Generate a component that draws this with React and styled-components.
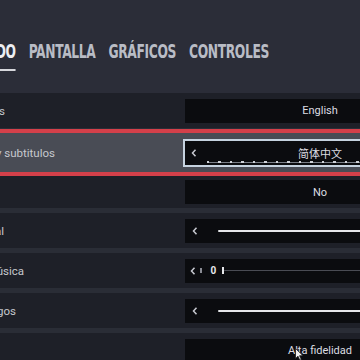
import React from "react";
import styled, { createGlobalStyle } from "styled-components";

const Global = createGlobalStyle`
  html, body {
    margin: 0;
    padding: 0;
    width: 360px;
    height: 360px;
    overflow: hidden;
    background: #1e2028;
  }
`;

const Screen = styled.div`
  width: 360px;
  height: 360px;
  overflow: hidden;
  position: relative;
  font-family: Roboto, "Noto Sans", "Liberation Sans", sans-serif;
`;

const Header = styled.div`
  height: 93px;
  background: #2b2d38;
  display: flex;
  align-items: flex-start;
  padding-top: 40px;
  box-sizing: border-box;
`;

const Tabs = styled.div`
  display: flex;
  gap: 18px;
  margin-left: -37px;
  transform: scaleX(0.72);
  transform-origin: left center;
`;

const Tab = styled.div`
  font-family: "Liberation Sans Narrow", "DejaVu Sans Condensed", "Liberation Sans", sans-serif;
  font-weight: 700;
  font-size: 19px;
  letter-spacing: -0.5px;
  line-height: 22px;
  color: ${(p) => (p.$active ? "#eceef2" : "#b9bcc5")};
  padding-bottom: 7px;
  border-bottom: 2px solid ${(p) => (p.$active ? "#d6d7dc" : "transparent")};
  white-space: nowrap;
`;

const List = styled.div`
  display: flex;
  flex-direction: column;
  background: #2a2d36;
`;

const Row = styled.div`
  height: ${(p) => p.$h || 35}px;
  margin-top: ${(p) => p.$mt ?? 5}px;
  background: #1e2028;
  display: flex;
  align-items: center;
  flex-shrink: 0;
`;

const SelectedRow = styled(Row)`
  background: #494c55;
  box-shadow: 0 -4px 0 #d4404a, 0 4px 0 #d4404a;
`;

const LabelCell = styled.div`
  width: 183px;
  flex-shrink: 0;
  display: flex;
`;

const LabelClip = styled.div`
  width: ${(p) => Math.max(p.$end, 0)}px;
  margin-left: ${(p) => Math.min(p.$end, 0)}px;
  display: flex;
  justify-content: flex-end;
`;

const LabelText = styled.span`
  flex-shrink: 0;
  white-space: nowrap;
  font-size: 11.5px;
  color: #c6c8ce;
`;

const Control = styled.div`
  margin-left: 2px;
  width: 270px;
  height: 24px;
  flex-shrink: 0;
  background: #0b0c0f;
  display: flex;
  align-items: center;
  position: relative;
  box-sizing: border-box;
`;

const SelectedControl = styled(Control)`
  margin-left: 0;
  width: 274px;
  height: 28px;
  border: 2px solid #c6d3e0;
  &::after {
    content: "";
    position: absolute;
    left: 22px;
    right: 0;
    bottom: 2px;
    height: 2px;
    background:
      repeating-linear-gradient(90deg, #d0d3da 0 2.5px, transparent 2.5px 11.5px),
      linear-gradient(#7a7e87, #7a7e87) 0 1px / 100% 1px no-repeat;
  }
`;

const Chevron = styled.svg`
  width: 6px;
  height: 8px;
  margin-left: ${(p) => p.$ml ?? 7}px;
  flex-shrink: 0;
`;

const ValueText = styled.span`
  position: absolute;
  left: 0;
  right: 0;
  text-align: center;
  font-size: 11px;
  color: #dcdde2;
  font-family: Roboto, "Noto Sans", "Noto Sans CJK SC", sans-serif;
  pointer-events: none;
`;

const Track = styled.div`
  flex: 1;
  height: ${(p) => (p.$thin ? 1 : 2)}px;
  margin-left: ${(p) => p.$ml ?? 20}px;
  background: ${(p) => (p.$thin ? "#4a4c54" : "#e6e7ea")};
  border-radius: 1px;
`;

const Tick = styled.div`
  width: 1.5px;
  height: ${(p) => p.$h || 6}px;
  margin-left: ${(p) => p.$ml}px;
  background: ${(p) => p.$c || "#8a8c94"};
  flex-shrink: 0;
`;

const Zero = styled.span`
  font-size: 10px;
  font-weight: 700;
  color: #e8e9ec;
  margin-left: 9px;
  line-height: 1;
`;

const Cursor = styled.svg`
  position: absolute;
  left: 295px;
  top: 348px;
  width: 9px;
  height: 13px;
`;

const ChevronIcon = ({ ml }) => (
  <Chevron $ml={ml} viewBox="0 0 6 8">
    <polyline points="4.5,0.8 1.5,4 4.5,7.2" fill="none" stroke="#c9cbd2" strokeWidth="1.5" />
  </Chevron>
);

const Label = ({ end, children }) => (
  <LabelCell>
    <LabelClip $end={end}>
      <LabelText>{children}</LabelText>
    </LabelClip>
  </LabelCell>
);

export default function App() {
  return (
    <Screen>
      <Global />
      <Header>
        <Tabs>
          <Tab $active>SONIDO</Tab>
          <Tab>PANTALLA</Tab>
          <Tab>GRÁFICOS</Tab>
          <Tab>CONTROLES</Tab>
        </Tabs>
      </Header>
      <List>
        <Row $mt={0}>
          <Label end={5}>Idioma de menús</Label>
          <Control>
            <ValueText>English</ValueText>
          </Control>
        </Row>
        <SelectedRow $h={39} $mt={5}>
          <Label end={55}>Idioma de voz y subtitulos</Label>
          <SelectedControl>
            <ChevronIcon ml={6} />
            <ValueText>简体中文</ValueText>
          </SelectedControl>
        </SelectedRow>
        <Row $h={32} $mt={4}>
          <Label end={-6}>Subtítulos</Label>
          <Control>
            <ValueText>No</ValueText>
          </Control>
        </Row>
        <Row>
          <Label end={4}>Volumen general</Label>
          <Control>
            <ChevronIcon />
            <Track />
          </Control>
        </Row>
        <Row>
          <Label end={24}>Volumen de música</Label>
          <Control>
            <ChevronIcon ml={5} />
            <Tick $ml={4} $h={5} />
            <Zero>0</Zero>
            <Tick $ml={6} $h={7} $c="#e6e7ea" />
            <Track $thin $ml={0} />
          </Control>
        </Row>
        <Row>
          <Label end={16}>Volumen de diálogos</Label>
          <Control>
            <ChevronIcon />
            <Track />
          </Control>
        </Row>
        <Row>
          <Label end={-6}>Calidad de audio</Label>
          <Control>
            <ValueText>Alta fidelidad</ValueText>
          </Control>
        </Row>
      </List>
      <Cursor viewBox="0 0 9 13">
        <path d="M0.5 0.5 L0.5 10.5 L3 8.2 L4.8 12.2 L6.3 11.5 L4.6 7.7 L8 7.7 Z" fill="#f2f2f2" stroke="#1a1a1a" strokeWidth="0.8" />
      </Cursor>
    </Screen>
  );
}
